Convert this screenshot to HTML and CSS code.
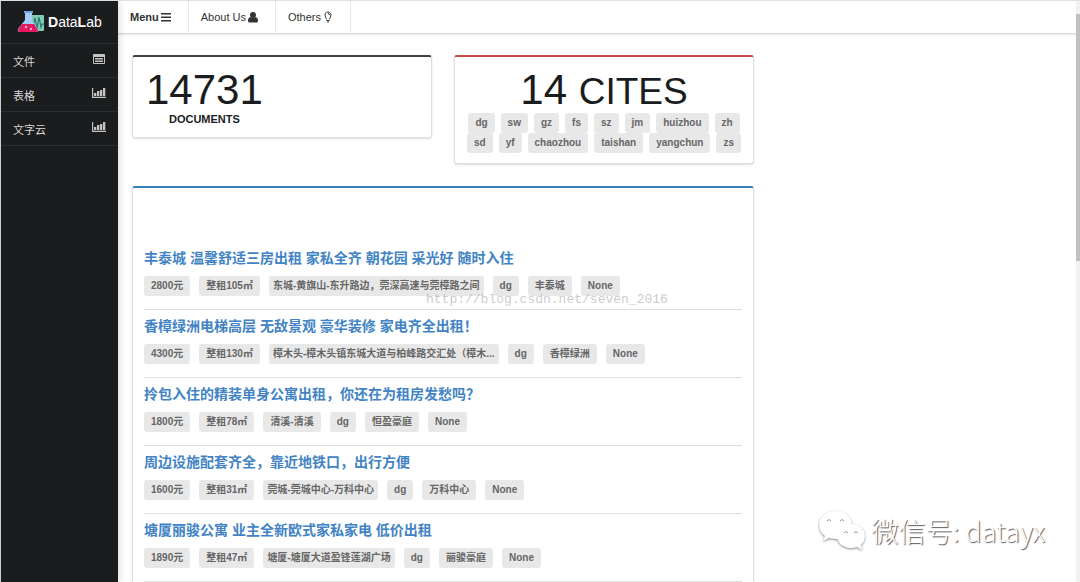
FILE: index.html
```html
<!DOCTYPE html>
<html lang="zh-CN">
<head>
<meta charset="utf-8">
<title>DataLab</title>
<link rel="stylesheet" href="styles.css">
</head>
<body>
<div class="app">
  <nav class="sidebar">
    <a class="brand" href="#">
      <svg class="brand-icon" viewBox="0 0 28 22" aria-hidden="true">
        <rect x="12" y="4" width="15" height="16" rx="1" fill="#7fcdb4"/>
        <path d="M13 15h3l2-8 2 11 2-12 2 10 1-3h2" fill="none" stroke="#27796f" stroke-width="1.2"/>
        <path d="M8 1h7v8l6 9q1 3-2 3H3q-3 0-2-3l7-9z" fill="#a4cdf4"/>
        <path d="M7 0h9v2H7z" fill="#6fa5e2"/>
        <path d="M5 13h12l4 6q0 2-2 2H3q-2 0-2-2z" fill="#e5195f"/>
        <circle cx="9" cy="16" r="1.2" fill="#ffb3c8"/><circle cx="14" cy="18" r="1.2" fill="#ffb3c8"/>
      </svg>
      <span><b>D</b>ata<b>L</b>ab</span>
    </a>
    <a class="side-item" href="#"><span>文件</span>
      <svg class="side-icon" viewBox="0 0 14 12" aria-hidden="true"><path fill-rule="evenodd" d="M2 1h10q1 0 1 1v8q0 1-1 1H2q-1 0-1-1V2q0-1 1-1zM2 4v6h10V4z"/><path d="M3 5h8v1.400H3zM3 7.500h8V9H3z"/></svg></a>
    <a class="side-item" href="#"><span>表格</span>
      <svg class="side-icon" viewBox="0 0 14 12" aria-hidden="true"><path d="M0 1h1.200v8.800H14V11H0zM2 6h2.300v3H2zM5 4h2.300v5H5zM8 3h2.300v6H8zM11 1h2.300v8H11z"/></svg></a>
    <a class="side-item" href="#"><span>文字云</span>
      <svg class="side-icon" viewBox="0 0 14 12" aria-hidden="true"><path d="M0 1h1.200v8.800H14V11H0zM2 6h2.300v3H2zM5 4h2.300v5H5zM8 3h2.300v6H8zM11 1h2.300v8H11z"/></svg></a>
  </nav>

  <div class="page">
    <header class="topbar">
      <a class="top-item strong" href="#">Menu<svg class="top-icon" viewBox="0 0 14 12" aria-hidden="true"><path d="M2 2h10v1.500H2zM2 5.500h10V7H2zM2 9h10v1.500H2z"/></svg></a>
      <a class="top-item" href="#">About Us<svg class="top-icon" viewBox="0 0 14 12" aria-hidden="true"><circle cx="7" cy="4" r="3"/><path d="M4.500 6Q7 8 9.500 6 12 6.500 12 10q0 1.500-1.500 1.500h-7Q2 11.500 2 10q0-3.500 2.500-4z"/></svg></a>
      <a class="top-item" href="#">Others<svg class="top-icon" viewBox="0 0 14 12" aria-hidden="true"><path fill="none" stroke="currentColor" d="M5.500 8.500Q5.500 7.500 4.500 6 3.500 4 4.500 2.200 5.500 1 7 1t2.500 1.200Q10.500 4 9.500 6 8.500 7.500 8.500 8.500M7 2.500q1.500 0 1.500 1.500M5.500 9.500h3M6 11h2"/></svg></a>
    </header>

    <main class="content">
      <section class="card dark">
        <div class="statistic">
          <div class="value">14731</div>
          <div class="caption">DOCUMENTS</div>
        </div>
      </section>

      <section class="card red">
        <div class="value centered">14 <span class="unit">CITES</span></div>
        <div class="cities">
          <a class="label" href="#">dg</a><a class="label" href="#">sw</a><a class="label" href="#">gz</a><a class="label" href="#">fs</a><a class="label" href="#">sz</a><a class="label" href="#">jm</a><a class="label" href="#">huizhou</a><a class="label" href="#">zh</a><a class="label" href="#">sd</a><a class="label" href="#">yf</a><a class="label" href="#">chaozhou</a><a class="label" href="#">taishan</a><a class="label" href="#">yangchun</a><a class="label" href="#">zs</a>
        </div>
      </section>

      <section class="card blue listing">
        <article class="item">
          <a class="title" href="#">丰泰城 温馨舒适三房出租 家私全齐 朝花园 采光好 随时入住</a>
          <div class="labels"><span class="label">2800元</span><span class="label">整租105㎡</span><span class="label address">东城-黄旗山-东升路边，莞深高速与莞樟路之间</span><span class="label">dg</span><span class="label">丰泰城</span><span class="label">None</span></div>
          <span class="watermark">http://blog.csdn.net/seven_2016</span>
        </article>
        <article class="item">
          <a class="title" href="#">香樟绿洲电梯高层 无敌景观 豪华装修 家电齐全出租！</a>
          <div class="labels"><span class="label">4300元</span><span class="label">整租130㎡</span><span class="label address">樟木头-樟木头镇东城大道与柏峰路交汇处（樟木...</span><span class="label">dg</span><span class="label">香樟绿洲</span><span class="label">None</span></div>
        </article>
        <article class="item">
          <a class="title" href="#">拎包入住的精装单身公寓出租，你还在为租房发愁吗？</a>
          <div class="labels"><span class="label">1800元</span><span class="label">整租78㎡</span><span class="label">清溪-清溪</span><span class="label">dg</span><span class="label">恒盈豪庭</span><span class="label">None</span></div>
        </article>
        <article class="item">
          <a class="title" href="#">周边设施配套齐全，靠近地铁口，出行方便</a>
          <div class="labels"><span class="label">1600元</span><span class="label">整租31㎡</span><span class="label address">莞城-莞城中心-万科中心</span><span class="label">dg</span><span class="label">万科中心</span><span class="label">None</span></div>
        </article>
        <article class="item">
          <a class="title" href="#">塘厦丽骏公寓 业主全新欧式家私家电 低价出租</a>
          <div class="labels"><span class="label">1890元</span><span class="label">整租47㎡</span><span class="label address">塘厦-塘厦大道盈锋莲湖广场</span><span class="label">dg</span><span class="label">丽骏豪庭</span><span class="label">None</span></div>
        </article>
        <article class="item"></article>
      </section>
    </main>
  </div>
  <div class="scroll-track"><div class="scroll-thumb"></div></div>
</div>

<div class="wechat">
  <svg class="wechat-icon" viewBox="0 0 48 42" aria-hidden="true">
    <g class="bubble">
      <path d="M17 1C8 1 1 7 1 15q0 7 6 11l-2 5 6-3q4 1 8 1c9 0 15-6 15-14S26 1 17 1z"/>
      <path d="M33 14c-8 0-14 5-14 12s6 12 14 12q3 0 6-1l5 3-1-5q4-4 4-9c0-7-6-12-14-12z"/>
    </g>
    <path class="eyes" d="M9 11q2-3 4 0M22 11q2-3 4 0M26 23q2-3 4 0M36 23q2-3 4 0"/>
  </svg>
  <span>微信号: datayx</span>
</div>
</body>
</html>
```
FILE: styles.css
```css
* {
  box-sizing: border-box;
}

body {
  margin: 0;
  overflow: hidden;
  background: #fff;
  color: #1b1c1d;
  font-family: "Liberation Sans", "Noto Sans CJK SC", sans-serif;
  font-size: 11px;
}

a {
  color: inherit;
  text-decoration: none;
}

.app {
  display: flex;
  height: 100vh;
  overflow: hidden;
  border-top: 1px solid #e0e0e0;
  border-left: 1px solid #c8cccc;
}

/* Sidebar */
.sidebar {
  flex: none;
  width: 117px;
  background: #1b1c1d;
  color: #d8d8d8;
  box-shadow: 0 0 8px rgba(0, 0, 0, 0.2);
  z-index: 1;
}

.brand {
  display: flex;
  align-items: center;
  gap: 3px;
  height: 43px;
  padding-left: 16px;
  border-bottom: 1px solid #2b2c2e;
  color: #fff;
  font-size: 14px;
}

.brand-icon {
  width: 28px;
  height: 22px;
}

.side-item {
  display: flex;
  align-items: center;
  justify-content: space-between;
  height: 34px;
  padding: 0 12px;
  border-bottom: 1px solid #2b2c2e;
}

.side-icon {
  width: 14px;
  height: 12px;
  margin-bottom: 3px;
  fill: #c4c4c4;
}

/* Main column */
.page {
  flex: 1;
  min-width: 0;
}

.topbar {
  display: flex;
  height: 33px;
  border-bottom: 1px solid #dcdcdc;
  box-shadow: 0 1px 2px rgba(34, 36, 38, 0.12);
}

.top-item {
  display: flex;
  align-items: center;
  padding: 0 15px 0 12px;
  border-right: 1px solid #e8e8e8;
  color: #333;
}

.strong {
  font-weight: bold;
}

.top-icon {
  width: 14px;
  height: 12px;
  fill: currentColor;
}

.content {
  display: grid;
  grid-template-columns: repeat(3, minmax(0, 1fr));
  align-items: start;
  gap: 22px;
  padding: 21px 0 0 14px;
}

.card {
  padding: 10px 9px;
  border: 1px solid #dededf;
  border-top: 2px solid #1b1c1d;
  border-radius: 3px;
  box-shadow: 0 1px 2px rgba(34, 36, 38, 0.15);
}

.dark {
  padding: 11px 13px;
  border-top-color: #404243;
}

.red {
  padding-top: 11px;
  border-top-color: #c9494c;
}

.blue {
  border-top-color: #3583bd;
}

.statistic {
  display: inline-block;
  vertical-align: top;
  text-align: center;
}

.value {
  font-size: 42px;
  line-height: 44px;
}

.centered {
  text-align: center;
}

.unit {
  font-size: 37px;
  line-height: 36px;
}

.caption {
  font-weight: bold;
  line-height: 14px;
}

.cities {
  display: flex;
  flex-wrap: wrap;
  justify-content: center;
  column-gap: 6px;
  padding-top: 1px;
}

.label {
  padding: 0 7px;
  border-radius: 3px;
  background: #e8e8e8;
  color: #666;
  font-size: 10px;
  font-weight: bold;
  line-height: 20px;
  white-space: nowrap;
}

.address {
  padding: 0 4px;
}

/* Rental listing */
.listing {
  grid-column: span 2;
  padding: 54px 11px 0;
}

.item {
  position: relative;
  display: flex;
  flex-direction: column;
  align-items: flex-start;
  gap: 9px;
  padding: 7px 0 13px;
  border-bottom: 1px solid #dedede;
}

.title {
  color: #4183c4;
  font-size: 14px;
  font-weight: bold;
  line-height: 18px;
}

.labels {
  display: flex;
  gap: 9px;
}

.watermark {
  position: absolute;
  left: 282px;
  bottom: 1px;
  color: rgba(150, 150, 150, 0.5);
  font-family: "Liberation Mono", monospace;
  font-size: 13px;
  line-height: 16px;
}

/* Scroll indicator */
.scroll-track {
  flex: none;
  width: 4px;
  padding-top: 13px;
  background: #f1f1f1;
}

.scroll-thumb {
  height: 247px;
  background: #c1c1c1;
}

/* Account badge floating over the page */
.wechat {
  position: absolute;
  right: 35px;
  bottom: 30px;
  display: flex;
  align-items: center;
  gap: 6px;
  color: #fff;
  font-family: "Noto Sans CJK SC", sans-serif;
  font-size: 27px;
  font-weight: 300;
  line-height: 42px;
  text-shadow: 1px 1px 1px #555;
}

.wechat-icon {
  width: 48px;
  height: 42px;
}

.bubble {
  fill: #fff;
  filter: drop-shadow(0 1px 1px #888);
}

.eyes {
  fill: none;
  stroke: #999;
}
```
